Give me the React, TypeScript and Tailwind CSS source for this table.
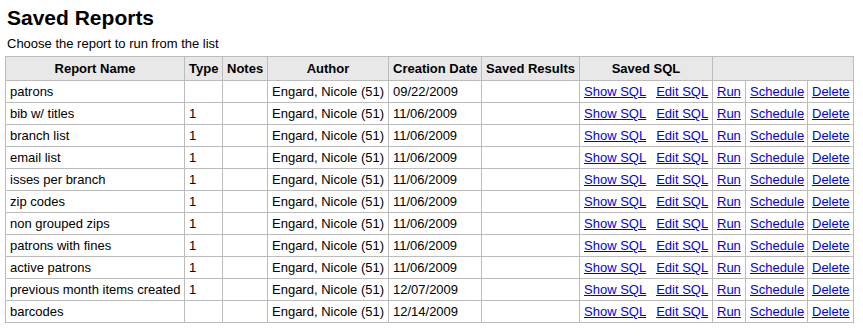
const reports = [
  { name: "patrons", type: "", date: "09/22/2009" },
  { name: "bib w/ titles", type: "1", date: "11/06/2009" },
  { name: "branch list", type: "1", date: "11/06/2009" },
  { name: "email list", type: "1", date: "11/06/2009" },
  { name: "isses per branch", type: "1", date: "11/06/2009" },
  { name: "zip codes", type: "1", date: "11/06/2009" },
  { name: "non grouped zips", type: "1", date: "11/06/2009" },
  { name: "patrons with fines", type: "1", date: "11/06/2009" },
  { name: "active patrons", type: "1", date: "11/06/2009" },
  { name: "previous month items created", type: "1", date: "12/07/2009" },
  { name: "barcodes", type: "", date: "12/14/2009" },
];

const th = "border border-[#bcbcbc] bg-[#e8e8e8] px-[4px] py-[4px] text-center font-bold leading-[15px] whitespace-nowrap";
const td = "border border-[#bcbcbc] px-[4px] py-[3px] text-left leading-[15px] whitespace-nowrap";
const link = "text-[#0000ee] underline";

export default function App() {
  return (
    <div className="min-h-[336px] bg-white px-[5px] pt-[6px] font-['Liberation_Sans',Arial,sans-serif] text-black">
      <h1 className="pl-[2px] text-[21px] font-bold leading-[24px]">Saved Reports</h1>
      <p className="mt-[6px] pl-[2px] text-[13px] leading-[15px]">Choose the report to run from the list</p>
      <table className="mt-[5px] w-[848px] table-fixed border-collapse text-[13px]">
        <colgroup>
          <col className="w-[179px]" />
          <col className="w-[38px]" />
          <col className="w-[45px]" />
          <col className="w-[121px]" />
          <col className="w-[93px]" />
          <col className="w-[98px]" />
          <col className="w-[133px]" />
          <col className="w-[33px]" />
          <col className="w-[62px]" />
          <col className="w-[46px]" />
        </colgroup>
        <thead>
          <tr>
            <th className={th}>Report Name</th>
            <th className={th}>Type</th>
            <th className={th}>Notes</th>
            <th className={th}>Author</th>
            <th className={th}>Creation Date</th>
            <th className={th}>Saved Results</th>
            <th className={th}>Saved SQL</th>
            <th className={th} colSpan={3}></th>
          </tr>
        </thead>
        <tbody>
          {reports.map((r) => (
            <tr key={r.name}>
              <td className={td}>{r.name}</td>
              <td className={td}>{r.type}</td>
              <td className={td}></td>
              <td className={td}>Engard, Nicole (51)</td>
              <td className={td}>{r.date}</td>
              <td className={td}></td>
              <td className={td}>
                <a href="#" className={link}>Show SQL</a>
                <a href="#" className={`${link} ml-[10px]`}>Edit SQL</a>
              </td>
              <td className={td}><a href="#" className={link}>Run</a></td>
              <td className={td}><a href="#" className={link}>Schedule</a></td>
              <td className={td}><a href="#" className={link}>Delete</a></td>
            </tr>
          ))}
        </tbody>
      </table>
    </div>
  );
}
